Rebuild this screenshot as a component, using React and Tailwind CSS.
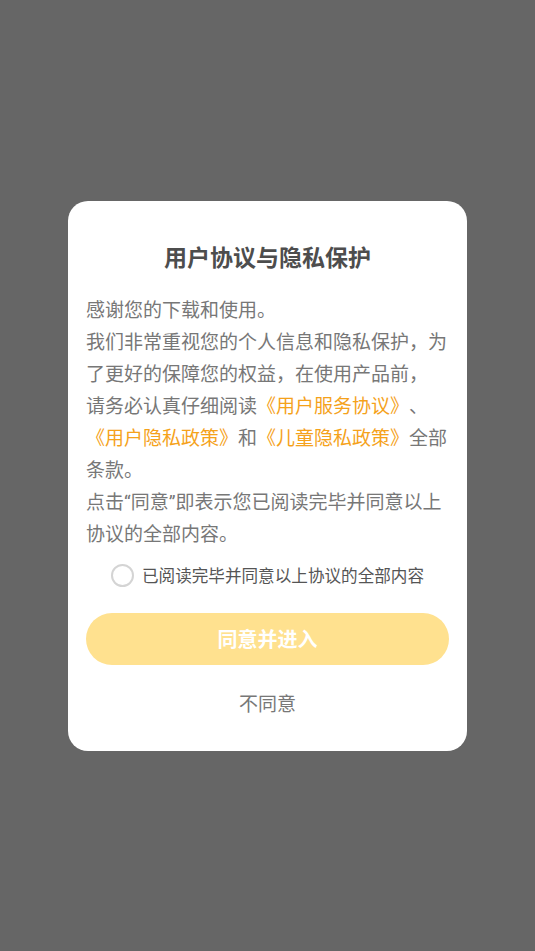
import React, { useState } from 'react';

const Link = ({ children }) => <span className="text-[#f5a21b]">{children}</span>;

// 原图里的引号是半角宽度
const Quote = ({ children }) => <span className="font-['Roboto'] leading-none">{children}</span>;

const PrivacyDialog = () => {
  const [checked, setChecked] = useState(false);

  return (
    <div className="w-[399px] rounded-[20px] bg-white px-[18px] pt-[40px] pb-[32px]">
      <h2 className="text-center text-[23px] leading-[30px] font-bold text-[#4d4d4d]">用户协议与隐私保护</h2>

      {/* 行尾按原图手动断行 */}
      <div className="mt-[22px] text-[19px] leading-[32px] whitespace-nowrap text-[#777777] [text-spacing-trim:space-all]">
        <p>感谢您的下载和使用。</p>
        <p>
          我们非常重视您的个人信息和隐私保护，为
          <br />
          了更好的保障您的权益，在使用产品前，
          <br />
          请务必认真仔细阅读<Link>《用户服务协议》</Link>、
          <br />
          <Link>《用户隐私政策》</Link>和<Link>《儿童隐私政策》</Link>全部
          <br />
          条款。
        </p>
        <p>
          点击<Quote>“</Quote>同意<Quote>”</Quote>即表示您已阅读完毕并同意以上
          <br />
          协议的全部内容。
        </p>
      </div>

      <label className="mt-[15px] flex h-[24px] cursor-pointer items-center justify-center gap-[8px]">
        <span
          onClick={() => setChecked(!checked)}
          className={`h-[23px] w-[23px] shrink-0 rounded-full border-2 ${checked ? 'border-[#ffd45c] bg-[#ffd45c]' : 'border-[#d4d4d4]'}`}
        ></span>
        <span className="text-[16.6px] text-[#555555]">已阅读完毕并同意以上协议的全部内容</span>
      </label>

      <button
        className={`mt-[25px] h-[52px] w-full rounded-full text-[20px] font-bold text-white ${checked ? 'bg-[#ffcc33]' : 'bg-[#ffe18f]'}`}
      >
        同意并进入
      </button>

      <button className="mt-[22px] block w-full text-center text-[19px] leading-[32px] text-[#777777]">不同意</button>
    </div>
  );
};

export default function App() {
  return (
    <div
      className="flex h-[951px] w-full items-center justify-center bg-[#666666]"
      style={{ fontFamily: '"Noto Sans CJK SC", "Noto Sans", sans-serif' }}
    >
      <PrivacyDialog />
    </div>
  );
}
